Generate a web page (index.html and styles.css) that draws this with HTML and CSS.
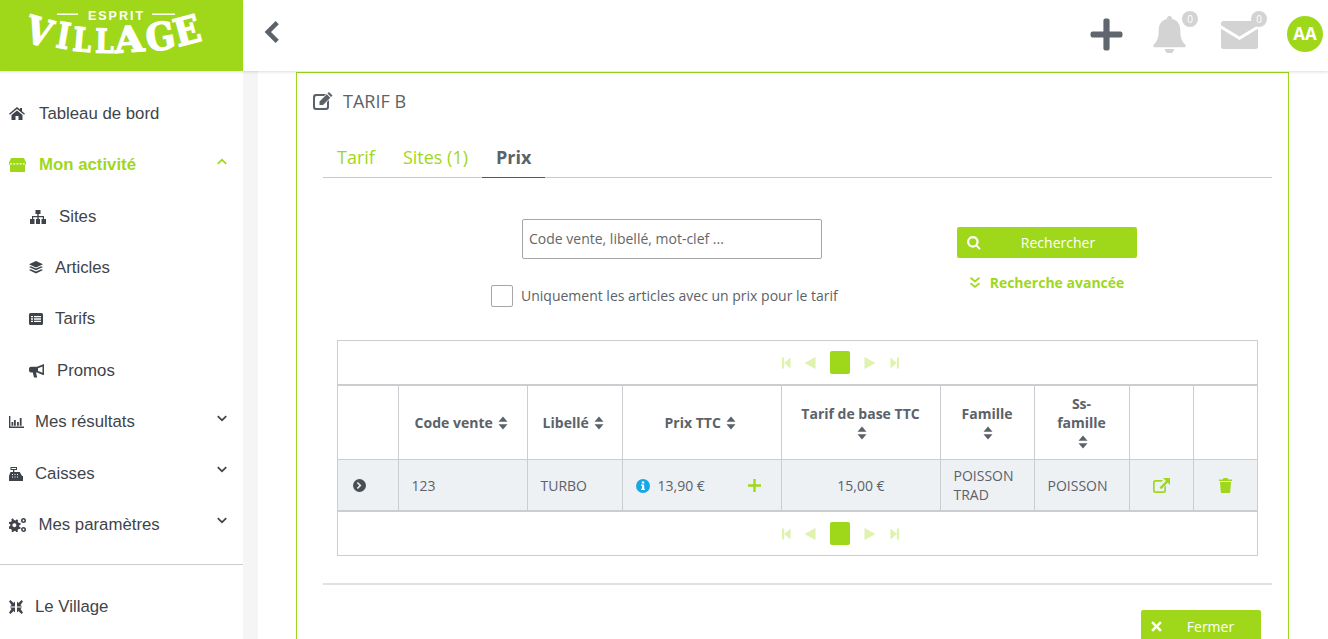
FILE: index.html
```html
<!DOCTYPE html>
<html lang="fr">
<head>
<meta charset="utf-8">
<title>Esprit Village - Tarif B</title>
<link rel="stylesheet" href="styles.css">
</head>
<body>
<svg class="defs" width="0" height="0" aria-hidden="true">
  <symbol id="i-first" viewBox="0 0 10 12"><path d="M0 0h2.400v12H0zM2.400 6L9.500 0v12z"/></symbol>
  <symbol id="i-prev" viewBox="0 0 12 12"><path d="M0.500 6L11.500 0v12z"/></symbol>
  <symbol id="i-next" viewBox="0 0 12 12"><path d="M11.500 6L0.500 0v12z"/></symbol>
  <symbol id="i-last" viewBox="0 0 10 12"><path d="M10 0H7.600v12H10zM7.600 6L0.500 0v12z"/></symbol>
  <symbol id="i-sort" viewBox="0 0 10 14"><path d="M5 0.500l4.500 5.200H.5zM5 13.500L.5 8.300h9z"/></symbol>
  <symbol id="i-down" viewBox="0 0 12 8"><path d="M1.600 0.400L6 4.600 10.400 0.400 11.800 1.900 6 7.600 0.200 1.900z"/></symbol>
</svg>
<div class="app">
  <header class="brand">
    <svg class="logo" viewBox="0 0 243 71" role="img" aria-label="Esprit Village">
      <rect x="57" y="13.500" width="21" height="1.400" fill="#fff"/>
      <rect x="152" y="13.500" width="23" height="1.400" fill="#fff"/>
      <text class="logo-top" x="116.500" y="20" text-anchor="middle">ESPRIT</text>
      <text class="logo-main" font-size="38" transform="translate(23 41) rotate(16) scale(.88 1)">V</text>
      <text class="logo-main" font-size="36" transform="translate(55 47) rotate(10) scale(.77 1)">I</text>
      <text class="logo-main" font-size="33" transform="translate(72 50.500) rotate(5) scale(.8 1)">L</text>
      <text class="logo-main" font-size="33" transform="translate(95 52.500) rotate(1) scale(.8 1)">L</text>
      <text class="logo-main" font-size="36" transform="translate(115 53) rotate(-4) scale(1.070 1)">A</text>
      <text class="logo-main" font-size="38" transform="translate(148 52) rotate(-9) scale(.9 1)">G</text>
      <text class="logo-main" font-size="38" transform="translate(178 47) rotate(-15) scale(.9 1)">E</text>
    </svg>
  </header>

  <header class="topbar">
    <svg class="back" viewBox="0 0 16 24"><path d="M12.600 1L15.800 4.200 8 12l7.800 7.800L12.600 23 1.600 12z"/></svg>
    <div class="actions">
      <svg class="act-plus" viewBox="0 0 32 32"><path d="M13 2.500a2 2 0 0 1 2-2h2a2 2 0 0 1 2 2V13h10.500a2 2 0 0 1 2 2v2a2 2 0 0 1-2 2H19v10.500a2 2 0 0 1-2 2h-2a2 2 0 0 1-2-2V19H2.500a2 2 0 0 1-2-2v-2a2 2 0 0 1 2-2H13z"/></svg>
      <div class="notify notify-bell">
        <svg viewBox="0 0 32 36"><path d="M16 0a2.500 2.500 0 0 1 2.500 3C24 4 26.500 8.500 26.500 14c0 8 2 11 5 14 .8 1 .2 2.500-1.200 2.500H1.700C.3 30.500-.3 29 .5 28c3-3 5-6 5-14C5.500 8.500 8 4 13.500 3A2.500 2.500 0 0 1 16 0zM11.500 32h9a4.500 4.500 0 0 1-9 0z"/></svg>
        <span class="badge">0</span>
      </div>
      <div class="notify notify-mail">
        <svg viewBox="0 0 37 28"><path d="M2.500 0h32A2.500 2.500 0 0 1 37 2.500v1.800L18.500 15.500 0 4.300V2.500A2.500 2.500 0 0 1 2.500 0zM0 7.800l18.500 11.200L37 7.800v17.700a2.500 2.500 0 0 1-2.500 2.500h-32A2.500 2.500 0 0 1 0 25.500z"/></svg>
        <span class="badge">0</span>
      </div>
      <div class="avatar">AA</div>
    </div>
  </header>

  <aside class="sidebar">
    <nav class="nav">
      <a class="nav-item"><svg class="ni ni-home" viewBox="0 0 16 13"><path d="M8 0l3 2.500V1h2v3.200L16 6.800l-.9 1L8 2 .9 7.800 0 6.800zM8 3.500l5.500 4.500v5H9.500V9h-3v4h-4V8z"/></svg><span class="t-home">Tableau de bord</span></a>
      <a class="nav-item active"><svg class="ni ni-store" viewBox="0 0 17 14"><path d="M2 0h13l2 4.500V6a1.500 1.500 0 0 1-1 1.400V14H1V7.400A1.500 1.500 0 0 1 0 6V4.500z"/><path class="cut" d="M1 5.800h15" stroke="#fff" stroke-width="1.200" stroke-dasharray="2 1.200"/></svg><span class="t-store">Mon activité</span><svg class="caret up" viewBox="0 0 12 8"><path d="M1.600 7.600L6 3.400l4.400 4.200 1.400-1.500L6 .4.200 6.100z"/></svg></a>
      <a class="nav-item sub"><svg class="ni ni-site" viewBox="0 0 18 14"><path d="M6.500 0h5v4h-1.800v2H15v3h2v5h-4.500V9h1.300V7.200H9.700V9H11v5H7V9h1.300V7.200H4.200V9H5.500v5H1V9h2V6h5.300V4H6.500z"/></svg><span class="t-sites">Sites</span></a>
      <a class="nav-item sub"><svg class="ni ni-layer" viewBox="0 0 14 13"><path d="M7 0l7 3.200-7 3.200-7-3.200zM1.800 5.200L7 7.600l5.200-2.400 1.800.9-7 3.200-7-3.200zM1.800 8.200L7 10.600l5.200-2.400 1.800.9-7 3.400-7-3.400z"/></svg><span class="t-art">Articles</span></a>
      <a class="nav-item sub"><svg class="ni ni-list" viewBox="0 0 14 12"><path fill-rule="evenodd" d="M1.500 0h11A1.500 1.500 0 0 1 14 1.500v9a1.500 1.500 0 0 1-1.500 1.500h-11A1.500 1.500 0 0 1 0 10.500v-9A1.500 1.500 0 0 1 1.500 0zM2 3v1.300h2V3zm3 0v1.300h7V3zM2 5.300v1.400h2V5.300zm3 0v1.400h7V5.300zM2 7.700V9h2V7.700zm3 0V9h7V7.700z"/></svg><span class="t-art">Tarifs</span></a>
      <a class="nav-item sub"><svg class="ni ni-horn" viewBox="0 0 16 14"><path d="M15 0v11h-1L8 8.500H7l1.200 5H5l-1.200-5H2A2 2 0 0 1 0 6.500V4.800a2 2 0 0 1 2-2h6zM13.500 2.500L9 4.200v2.800l4.500 1.700z"/></svg><span class="t-promo">Promos</span></a>
      <a class="nav-item"><svg class="ni ni-chart" viewBox="0 0 15 12"><path d="M0 0h1.400v10.600H15V12H0zM2.500 6h1.800v3.800H2.500zM5 4h1.800v5.800H5zM8 6h1.800v3.800H8zM10.800 2h1.800v7.800h-1.800z"/></svg><span class="t-main">Mes résultats</span><svg class="caret"><use href="#i-down"/></svg></a>
      <a class="nav-item"><svg class="ni ni-cash" viewBox="0 0 14 14"><path fill-rule="evenodd" d="M1.500 0h6.500v3H5.300v2h5.500l2.200 4H14v5H0V9l1.500-4h2.500V3H1.500zM2.500 1v1h4.500V1zM3 7v1h1V7zm2.500 0v1h1V7zM8 7v1h1V7zM3 9.500v1h1v-1zm2.500 0v1h1v-1zM8 9.500v1h1v-1z"/></svg><span class="t-wide">Caisses</span><svg class="caret"><use href="#i-down"/></svg></a>
      <a class="nav-item"><svg class="ni ni-cog" viewBox="0 0 18 14"><path fill-rule="evenodd" d="M5 2l1.800.4.900-1.200 1.500 1-.5 1.500 1.100 1.200 1.600-.1.300 1.800-1.500.6v1.500l1.500.8-.5 1.600-1.600-.2-1 1.100.4 1.600-1.600.7-.9-1.300H5l-.9 1.300-1.600-.7.400-1.600-1-1.100-1.600.2L-.2 8.500l1.500-.8V6.200L-.2 5.600l.3-1.800 1.600.1 1.100-1.200-.5-1.500 1.500-1 .9 1.200zm1 3.300a2 2 0 1 0 0 3.800 2 2 0 0 0 0-3.800z"/><path fill-rule="evenodd" d="M14.500 0a2.500 2.500 0 1 1 0 5 2.500 2.500 0 0 1 0-5zm0 1.600a.9.900 0 1 0 0 1.800.9.900 0 0 0 0-1.800zM14.500 9a2.500 2.500 0 1 1 0 5 2.500 2.500 0 0 1 0-5zm0 1.600a.9.900 0 1 0 0 1.800.9.900 0 0 0 0-1.800z"/></svg><span class="t-cog">Mes paramètres</span><svg class="caret"><use href="#i-down"/></svg></a>
    </nav>
    <div class="nav-sep"></div>
    <a class="nav-item"><svg class="ni ni-comp" viewBox="0 0 14 14"><path d="M0 1.500L1.500 0l3 3L6 1.500V6.500H1l1.500-1.500zM14 1.500L12.500 0l-3 3L8 1.500V6.500h5l-1.500-1.500zM0 12.500L1.500 14l3-3L6 12.500V7.500H1l1.500 1.500zM14 12.500L12.500 14l-3-3L8 12.500V7.500h5l-1.500 1.500z"/></svg><span class="t-wide">Le Village</span></a>
  </aside>

  <main class="content">
    <section class="panel">
      <h1 class="panel-title">
        <svg class="title-icon" viewBox="0 0 20 18"><path d="M3 2h10l-2 2H3.500A1.500 1.500 0 0 0 2 5.500v9A1.500 1.500 0 0 0 3.500 16h9a1.500 1.500 0 0 0 1.500-1.500V10l2-2v7a3 3 0 0 1-3 3H3a3 3 0 0 1-3-3V5a3 3 0 0 1 3-3zM16 0l3.500 3.500-1.500 1.500L14.500 1.500zM13.800 2.200l3.500 3.500L10 13H6.500V9.500z"/></svg>
        <span>TARIF B</span>
      </h1>
      <div class="tabs">
        <a class="tab">Tarif</a>
        <a class="tab">Sites (1)</a>
        <a class="tab current">Prix</a>
      </div>
      <div class="search">
        <div class="search-left">
          <div class="search-input">Code vente, libellé, mot-clef ...</div>
          <label class="check"><span class="box"></span><span class="check-text">Uniquement les articles avec un prix pour le tarif</span></label>
        </div>
        <div class="search-right">
          <button class="btn btn-search">
            <svg class="btn-ico" viewBox="0 0 14 14"><path fill-rule="evenodd" d="M5.800 0a5.800 5.800 0 0 1 4.700 9.200l3.200 3.200-1.400 1.400-3.200-3.200A5.800 5.800 0 1 1 5.800 0zm0 2.200a3.600 3.600 0 1 0 0 7.200 3.600 3.600 0 0 0 0-7.200z"/></svg>
            <span>Rechercher</span>
          </button>
          <a class="advanced"><svg class="adv-ico" viewBox="0 0 10 11"><path d="M1 0l4 3.200L9 0l1 1.500-5 4-5-4zM1 5.500l4 3.200 4-3.200 1 1.500-5 4-5-4z"/></svg>Recherche avancée</a>
        </div>
      </div>

      <div class="grid">
        <div class="pager">
          <svg class="p p1"><use href="#i-first"/></svg>
          <svg class="p p2 p-b"><use href="#i-prev"/></svg>
          <span class="page"></span>
          <svg class="p p2 p-n"><use href="#i-next"/></svg>
          <svg class="p p1"><use href="#i-last"/></svg>
        </div>
        <table class="tbl">
          <colgroup><col class="c1"><col class="c2"><col class="c3"><col class="c4"><col class="c5"><col class="c6"><col class="c7"><col class="c8"><col class="c9"></colgroup>
          <thead>
            <tr>
              <th></th>
              <th class="inl">Code vente <svg class="sort"><use href="#i-sort"/></svg></th>
              <th class="inl">Libellé <svg class="sort"><use href="#i-sort"/></svg></th>
              <th class="inl">Prix TTC <svg class="sort"><use href="#i-sort"/></svg></th>
              <th class="stk">Tarif de base TTC<br><svg class="sort"><use href="#i-sort"/></svg></th>
              <th class="stk">Famille<br><svg class="sort"><use href="#i-sort"/></svg></th>
              <th>Ss-<br>famille<br><svg class="sort"><use href="#i-sort"/></svg></th>
              <th></th>
              <th></th>
            </tr>
          </thead>
          <tbody>
            <tr>
              <td class="ctr"><svg class="row-go" viewBox="0 0 14 14"><path fill-rule="evenodd" d="M7 0a7 7 0 1 1 0 14A7 7 0 0 1 7 0zM5.300 3.200L4.100 4.400 6.700 7 4.100 9.600l1.200 1.200L9.100 7z"/></svg></td>
              <td>123</td>
              <td>TURBO</td>
              <td class="price">
                <div class="price-in">
                  <svg class="info" viewBox="0 0 14 14"><circle cx="7" cy="7" r="7"/><path fill="#fff" d="M5.800 2.500h2.400v2H5.800zM5 5.500h3.200v4.200H9V11H5V9.700h1V6.800H5z"/></svg>
                  <span>13,90 €</span>
                  <svg class="add" viewBox="0 0 13 13"><path d="M5.300 0h2.400v5.300H13v2.400H7.700V13H5.300V7.700H0V5.300h5.300z"/></svg>
                </div>
              </td>
              <td class="ctr">15,00 €</td>
              <td class="two">POISSON TRAD</td>
              <td>POISSON</td>
              <td class="ctr"><svg class="act" viewBox="0 0 17 15"><path fill-rule="evenodd" d="M2.500 2H10L8.500 3.700h-6a.8.800 0 0 0-.8.800v7.900c0 .5.300.9.800.9h8c.5 0 .8-.4.800-.9V9L13 7.300v5.200A2.500 2.500 0 0 1 10.500 15h-8A2.500 2.500 0 0 1 0 12.500v-8A2.500 2.500 0 0 1 2.500 2z"/><path d="M10 0h7v7l-2.300-2.300-6.500 6.500-1.700-1.700 6.500-6.500z"/></svg></td>
              <td class="ctr"><svg class="act trash" viewBox="0 0 13 15"><path d="M4.500 0h4L9.300 1.500H13V3H0V1.500h3.700zM1 4h11l-.8 10a1 1 0 0 1-1 1H2.800a1 1 0 0 1-1-1z"/></svg></td>
            </tr>
          </tbody>
        </table>
        <div class="pager">
          <svg class="p p1"><use href="#i-first"/></svg>
          <svg class="p p2 p-b"><use href="#i-prev"/></svg>
          <span class="page"></span>
          <svg class="p p2 p-n"><use href="#i-next"/></svg>
          <svg class="p p1"><use href="#i-last"/></svg>
        </div>
      </div>

      <div class="panel-sep"></div>
      <div class="panel-foot">
        <button class="btn btn-close">
          <svg class="btn-ico close-ico" viewBox="0 0 11 11"><path d="M2 .2L5.500 3.700 9 .2 10.800 2 7.300 5.500 10.800 9 9 10.800 5.500 7.300 2 10.800.2 9 3.700 5.500.2 2z"/></svg>
          <span>Fermer</span>
        </button>
      </div>
    </section>
  </main>
</div>
</body>
</html>
```

FILE: styles.css
```css
* { box-sizing: border-box; }
html, body { margin: 0; height: 639px; overflow: hidden; background: #fff; }
body { font-family: "Open Sans", "Liberation Sans", sans-serif; color: #5b6269; }
.defs { position: absolute; }
svg { fill: currentColor; display: block; }

.app { display: grid; grid-template-columns: 243px 1fr; grid-template-rows: 71px 568px; height: 639px; }

.brand { background: #9fd81b; position: relative; z-index: 3; box-shadow: 0 1px 3px rgba(0,0,0,.12); }
.logo { width: 243px; height: 71px; }
.logo-top { font: 700 12.500px "Liberation Sans", sans-serif; letter-spacing: 2px; fill: #fff; }
.logo-main { font-family: "DejaVu Serif", serif; font-weight: 700; fill: #fff; stroke: #fff; stroke-width: 1.300px; }

.topbar { display: flex; align-items: center; justify-content: space-between; padding: 0 5px 0 20px; background: #fff; box-shadow: 0 1px 3px rgba(0,0,0,.14); position: relative; z-index: 2; }
.back { width: 16px; height: 24px; margin-top: -7px; color: #5b6269; }
.actions { display: flex; align-items: center; }
.act-plus { width: 33px; height: 33px; color: #5f666d; margin-top: -3px; }
.notify { position: relative; color: #d3d3d3; }
.notify-bell { margin-left: 30px; }
.notify-bell svg { width: 33px; height: 37px; margin-top: -3px; }
.notify-mail { margin-left: 35px; }
.notify-mail svg { width: 37px; height: 28px; margin-top: -2px; }
.badge { position: absolute; width: 16px; height: 16px; border-radius: 50%; background: #d3d3d3; color: #fff; font-size: 10px; line-height: 16px; text-align: center; }
.notify-bell .badge { top: -8px; right: -12px; }
.notify-mail .badge { top: -11.500px; right: -9px; }
.avatar { width: 36px; height: 36px; margin-left: 29px; margin-top: -3px; border-radius: 50%; background: #9fd81b; color: #fff; font: 700 17px/36px "Open Sans", sans-serif; text-align: center; }

.sidebar { background: #fff; font-family: "Liberation Sans", sans-serif; font-size: 16.800px; color: #3f444a; padding-top: 17.100px; }
.nav { display: flex; flex-direction: column; }
.nav-item { display: flex; align-items: center; height: 51.400px; padding-left: 9px; padding-right: 15px; color: #3f444a; }
.nav-item.active { color: #9fd81b; font-weight: 700; }
.nav-item.sub { padding-left: 29px; }
.ni { flex: none; }
.ni-home { width: 16px; height: 13px; }
.ni-store { width: 17px; height: 14px; }
.ni-site { width: 18px; height: 14px; }
.ni-layer { width: 14px; height: 13px; }
.ni-list { width: 14px; height: 12px; }
.ni-horn { width: 16px; height: 14px; }
.ni-chart { width: 15px; height: 12px; }
.ni-cash { width: 14px; height: 14px; }
.ni-cog { width: 18px; height: 14px; }
.ni-comp { width: 14px; height: 14px; }
.t-home { margin-left: 14px; }
.t-store { margin-left: 13px; }
.t-sites { margin-left: 12px; }
.t-art { margin-left: 12px; }
.t-promo { margin-left: 12px; }
.t-main { margin-left: 11px; }
.t-wide { margin-left: 12px; }
.t-cog { margin-left: 11.500px; }
.caret { width: 10px; height: 7px; margin-left: auto; margin-right: 1px; margin-top: -8px; color: #3f444a; }
.caret.up { color: #9fd81b; }
.nav-sep { height: 1px; background: #ccc; margin-top: 13.700px; margin-bottom: 16px; }

.content { background: #fff; border-left: 15px solid #f5f5f5; padding: 1px 39px 0 38px; overflow: hidden; }
.panel { border: 1px solid #9fd81b; height: 640px; padding: 0 16px 0 26px; background: #fff; }
.panel-title { display: flex; align-items: center; margin: 16px 0 0 -10px; height: 24px; font-size: 18px; font-weight: 400; color: #5b6269; }
.title-icon { width: 20px; height: 18px; margin-right: 10px; }
.tabs { display: flex; margin-top: 28px; height: 37px; border-bottom: 1px solid #c9c9cc; font-size: 18px; }
.tab { display: block; padding: 0 14px; line-height: 33px; height: 37px; color: #9fd81b; }
.tab.current { font-weight: 700; color: #5b6269; border-bottom: 1px solid #55595e; }

.search { display: grid; grid-template-columns: 634px 180px; margin-top: 41px; font-size: 14px; }
.search-left { display: flex; flex-direction: column; }
.search-input { margin-left: 199px; width: 300px; height: 40px; border: 1px solid #a6a6a6; border-radius: 2px; padding-left: 6px; line-height: 38px; color: #666; }
.check { display: flex; align-items: center; margin: 26px 0 0 168px; color: #5b6269; }
.check-text { margin-top: -2px; }
.box { width: 22px; height: 22px; border: 1px solid #a6a6a6; border-radius: 2px; margin-right: 8px; flex: none; }
.search-right { padding-top: 8px; display: flex; flex-direction: column; }
.btn { display: flex; align-items: center; border: 0; border-radius: 2px; background: #9fd81b; color: #fff; font: 400 14px "Open Sans", sans-serif; padding: 0; }
.btn-search { width: 180px; height: 31px; }
.btn-ico { width: 14px; height: 14px; margin-left: 10px; flex: none; }
.btn span { flex: 1; text-align: center; padding-right: 2px; }
.advanced { display: flex; align-items: center; justify-content: center; margin-top: 15px; height: 18px; font-weight: 700; font-size: 14px; color: #9fd81b; }
.adv-ico { width: 10px; height: 11px; margin-right: 10px; }

.grid { margin: 33px 0 0 14px; width: 921px; border: 1px solid #cbcdd0; }
.pager { display: flex; align-items: center; justify-content: center; height: 43px; color: #dff2ae; margin-left: 86px; }
.page { width: 20px; height: 23px; border-radius: 2px; background: #9fd81b; margin: 0 14px; }
.p { flex: none; height: 12px; }
.p1 { width: 9px; }
.p2 { width: 12px; }
.p-n { margin-right: 14px; }
.p-b { margin-left: 13px; }

.tbl { border-collapse: collapse; table-layout: fixed; width: 919px; font-size: 14px; border-top: 2px solid #cbcdd0; border-bottom: 2px solid #cbcdd0; }
.c1 { width: 60px; }
.c2 { width: 129px; }
.c3 { width: 95px; }
.c4 { width: 159px; }
.c5 { width: 159px; }
.c6 { width: 94px; }
.c7 { width: 95px; }
.c8 { width: 64px; }
.c9 { width: 64px; }
.tbl th, .tbl td { border: 1px solid #cbcdd0; vertical-align: middle; }
.tbl tr > :first-child { border-left: 0; }
.tbl tr > :last-child { border-right: 0; }
.tbl thead tr { height: 74px; }
.tbl tbody tr { height: 52px; background: #eef1f4; }
.tbl th { font-weight: 700; text-align: center; line-height: 19px; color: #5b6269; padding: 0 4px; }
.tbl th.inl { padding-right: 6px; }
.tbl th.stk { padding-top: 2px; }
.tbl thead tr th { border-top: 0; }
.tbl tbody tr td { border-bottom: 0; }
.tbl td { padding: 2px 12px 0 13px; line-height: 19px; color: #5b6269; }
.tbl td.two { padding-top: 0; }
.tbl td.ctr { text-align: center; }
.sort { display: inline-block; width: 10px; height: 14px; vertical-align: -2px; margin-left: 2px; }
.row-go { width: 13px; height: 13px; color: #4a4f55; margin: -1px auto 0; position: relative; left: -9px; }
.price { padding: 2px 0 0 !important; }
.price-in { display: flex; align-items: center; padding: 0 20px 0 13px; }
.info { width: 14px; height: 14px; color: #17a9e6; margin-right: 8px; }
.add { width: 13px; height: 13px; color: #9fd81b; margin-left: auto; }
.act { width: 17px; height: 15px; color: #9fd81b; margin: 0 auto; }
.trash { width: 13px; height: 15px; }

.panel-sep { height: 2px; background: #dfe1e3; margin-top: 27px; }
.panel-foot { display: flex; justify-content: flex-end; margin-top: 25px; padding-right: 11px; }
.btn-close { width: 120px; height: 32px; }
.close-ico { width: 11px; height: 11px; }
```
